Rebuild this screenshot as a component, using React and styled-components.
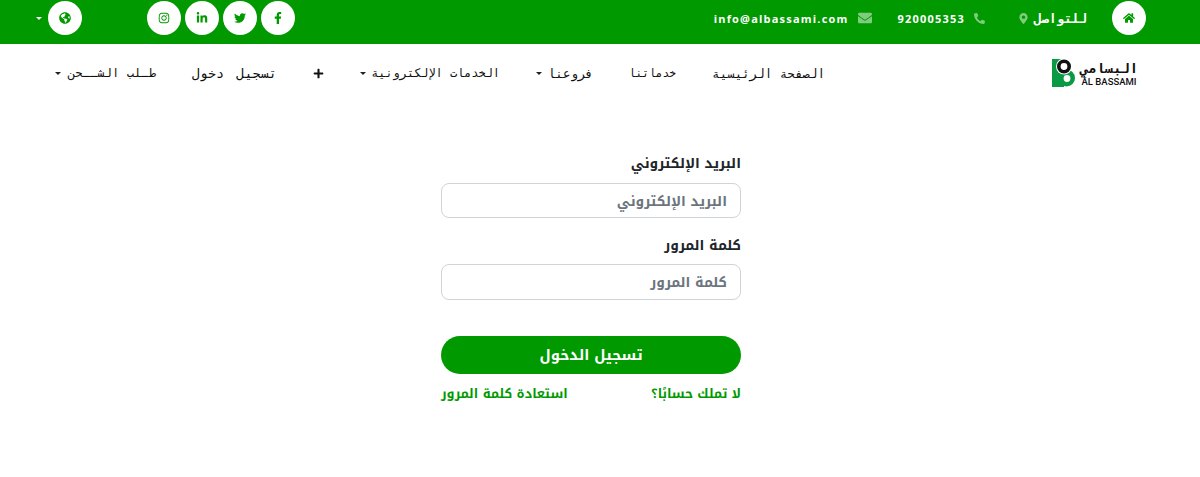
import React from "react";
import styled, { createGlobalStyle } from "styled-components";
import { FaHome, FaMapMarkerAlt, FaPhoneAlt, FaEnvelope, FaFacebookF, FaTwitter, FaLinkedinIn, FaInstagram, FaGlobeAmericas, FaPlus } from "react-icons/fa";

const GlobalStyle = createGlobalStyle`
  html, body { margin: 0; padding: 0; background: #fff; }
  body { font-family: "Noto Kufi Arabic", "DejaVu Sans", sans-serif; }
`;

const mono = `"DejaVu Sans Mono", monospace`;

const Page = styled.div`
  direction: rtl;
  width: 1200px;
  height: 477px;
  overflow: hidden;
`;

const TopBar = styled.header`
  height: 44px;
  background: #009900;
  display: flex;
  align-items: flex-start;
  padding: 1px 54px 0 36px;
  box-sizing: border-box;
`;

const Circle = styled.a`
  width: 34px;
  height: 34px;
  border-radius: 50%;
  background: #fff;
  color: #009900;
  font-size: 12px;
  display: flex;
  align-items: center;
  justify-content: center;
`;

const Contact = styled.div`
  display: flex;
  align-items: center;
  height: 34px;
  margin-right: ${(p) => p.$start}px;
  color: #fff;
  font-family: "Open Sans", ${mono};
  font-size: 11px;
  font-weight: 700;
  letter-spacing: 1.2px;
`;

const ContactLabel = styled.span`
  font-family: ${mono};
  font-size: 12.6px;
  letter-spacing: 0;
`;

const ContactIcon = styled.span`
  color: #7fcc7f;
  font-size: ${(p) => p.$size}px;
  display: flex;
  margin: ${(p) => (p.$after ? `0 ${p.$after}px 0 0` : "0 0 0 9px")};
`;

const Socials = styled.div`
  display: flex;
  gap: 4px;
  margin-right: auto;
`;

const Lang = styled.div`
  display: flex;
  align-items: center;
  gap: 6px;
  margin-right: 65px;
`;

const Caret = styled.i`
  display: inline-block;
  border-top: 3px solid ${(p) => p.$color || "#222"};
  border-left: 3px solid transparent;
  border-right: 3px solid transparent;
`;

const Nav = styled.nav`
  height: 58px;
  display: flex;
  align-items: center;
  padding: 0 62px 0 0;
`;

const Logo = styled.div`
  display: flex;
  align-items: center;
  gap: 5px;
  margin-left: 227px;
`;

const LogoMark = styled.svg`
  width: 23px;
  height: 28px;
  flex: none;
`;

const LogoWords = styled.div`
  display: flex;
  flex-direction: column;
  width: 58px;
  color: #111;
`;

const LogoArabic = styled.span`
  font-family: ${mono};
  font-size: 13.8px;
  font-weight: 700;
  line-height: 17px;
  align-self: center;
`;

const LogoLatin = styled.span`
  direction: ltr;
  font-family: Roboto, sans-serif;
  font-size: 9.5px;
  font-weight: 500;
  line-height: 10px;
  white-space: nowrap;
  align-self: center;
`;

const Links = styled.div`
  display: flex;
  align-items: center;
  gap: 36px;
`;

const NavLink = styled.a`
  display: flex;
  align-items: center;
  justify-content: space-between;
  width: ${(p) => p.$w}px;
  color: #111;
  font-family: ${mono};
  font-size: ${(p) => p.$size || 12.5}px;
  word-spacing: ${(p) => p.$words || 0}px;
  white-space: nowrap;
`;

const Form = styled.form`
  width: 300px;
  margin: 50px 459px 0 0;
  display: flex;
  flex-direction: column;
`;

const Label = styled.label`
  color: #212529;
  font-size: 13.8px;
  font-weight: 700;
  line-height: 22px;
  margin-bottom: ${(p) => p.$gap}px;
`;

const Input = styled.input`
  height: ${(p) => p.$h}px;
  box-sizing: border-box;
  border: 1px solid #ced4da;
  border-radius: 8px;
  padding: 0 13px;
  margin-bottom: 16px;
  font-family: inherit;
  font-size: 13.8px;
  font-weight: 700;
  outline: none;
  &::placeholder { color: #6c757d; opacity: 1; }
`;

const Submit = styled.button`
  height: 38px;
  margin-top: 20px;
  padding: 0;
  border: 0;
  border-radius: 19px;
  background: #009900;
  color: #fff;
  font-family: inherit;
  font-size: 14.6px;
  font-weight: 700;
`;

const FormLinks = styled.div`
  display: flex;
  justify-content: space-between;
  margin-top: 12px;
  font-size: 12.8px;
  font-weight: 700;
  line-height: 16px;
  color: #009900;
`;

const App = () => (
  <Page>
    <GlobalStyle />
    <TopBar>
      <Circle><FaHome /></Circle>
      <Contact $start={25}>
        <ContactLabel>للتواصل</ContactLabel>
        <ContactIcon $after={5} $size={11}><FaMapMarkerAlt /></ContactIcon>
      </Contact>
      <Contact $start={33}>
        <ContactIcon $size={11}><FaPhoneAlt /></ContactIcon>
        <span dir="ltr">920005353</span>
      </Contact>
      <Contact $start={26}>
        <ContactIcon $size={14}><FaEnvelope /></ContactIcon>
        <span dir="ltr">info@albassami.com</span>
      </Contact>
      <Socials>
        <Circle><FaFacebookF /></Circle>
        <Circle><FaTwitter /></Circle>
        <Circle><FaLinkedinIn /></Circle>
        <Circle><FaInstagram /></Circle>
      </Socials>
      <Lang>
        <Circle><FaGlobeAmericas /></Circle>
        <Caret $color="#fff" />
      </Lang>
    </TopBar>
    <Nav>
      <Logo>
        <LogoWords>
          <LogoArabic>البسامي</LogoArabic>
          <LogoLatin>ĀL BASSAMI</LogoLatin>
        </LogoWords>
        <LogoMark viewBox="0 0 23 28">
          <path d="M0 0h12v28H0z" fill="#0a9a44" />
          <circle cx="14.5" cy="19" r="8.5" fill="#0a9a44" />
          <circle cx="12" cy="7.5" r="8" fill="#fff" />
          <circle cx="12" cy="7.5" r="5.2" fill="none" stroke="#111" strokeWidth="3.6" />
          <circle cx="15" cy="19.5" r="3.4" fill="#fff" />
        </LogoMark>
      </Logo>
      <Links>
        <NavLink $w={113}>الصفحة الرئيسية</NavLink>
        <NavLink $w={47} $size={11.2}>خدماتنا</NavLink>
        <NavLink $w={57}>فروعنا <Caret /></NavLink>
        <NavLink $w={140} $size={11.9}>الخدمات الإلكترونية <Caret /></NavLink>
        <NavLink $w={11}><FaPlus size={11} /></NavLink>
        <NavLink $w={85} $size={13.5} $words={4}>تسجيل دخول</NavLink>
        <NavLink $w={101} $size={12.2}>طـلب الشــحن <Caret /></NavLink>
      </Links>
    </Nav>
    <Form onSubmit={(e) => e.preventDefault()}>
      <Label $gap={9}>البريد الإلكتروني</Label>
      <Input $h={35} type="email" placeholder="البريد الإلكتروني" />
      <Label $gap={8}>كلمة المرور</Label>
      <Input $h={36} type="password" placeholder="كلمة المرور" />
      <Submit>تسجيل الدخول</Submit>
      <FormLinks>
        <a>لا تملك حسابًا؟</a>
        <a>استعادة كلمة المرور</a>
      </FormLinks>
    </Form>
  </Page>
);

export default App;
